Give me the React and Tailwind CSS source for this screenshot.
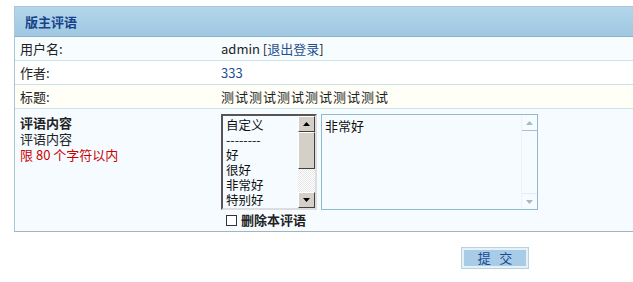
export default function App() {
  const font = { fontFamily: '"Noto Sans CJK SC", "Liberation Sans", sans-serif' };
  const items = ["自定义", "--------", "好", "很好", "非常好", "特别好"];
  return (
    <div className="w-[633px] h-[282px] overflow-hidden bg-white text-[13px] text-[#222] leading-[16px]" style={font}>
      <div className="pt-[6px] pl-[14px]">
        <div className="w-[640px] border-l border-t border-b border-[#a9c7d6] border-b-[#a3b4bb]">
          {/* header */}
          <div className="h-[30px] flex items-center pl-[10px] bg-gradient-to-b from-[#b2d6ea] to-[#a0c8e2] border-b border-[#8fb1c4]">
            <span className="font-bold text-[#17438a] text-[13px]">版主评语</span>
          </div>
          {/* rows */}
          <div className="h-[24px] flex items-center bg-[#f7fcff] border-b border-[#cbe4ea]">
            <div className="w-[206px] pl-[5px]">用户名:</div>
            <div>admin [<span className="text-[#1f4f8f]">退出登录</span>]</div>
          </div>
          <div className="h-[24px] flex items-center bg-white border-b border-[#cbe4ea]">
            <div className="w-[206px] pl-[5px]">作者:</div>
            <div className="text-[#1f4f8f]">333</div>
          </div>
          <div className="h-[24px] flex items-center bg-[#fffff8] border-b border-[#cbe4ea]">
            <div className="w-[206px] pl-[5px]">标题:</div>
            <div className="tracking-[1px] text-[#222]">测试测试测试测试测试测试</div>
          </div>
          <div className="h-[122px] flex bg-[#f5fbff] pt-[5px]">
            <div className="w-[206px] pl-[5px] flex flex-col pt-[1px]">
              <div className="font-bold">评语内容</div>
              <div>评语内容</div>
              <div className="text-[#cc0000]">限 80 个字符以内</div>
            </div>
            <div className="flex flex-col">
              <div className="flex gap-[4px]">
                {/* listbox */}
                <div className="w-[96px] h-[96px] bg-[#f5fbff] border-2 border-t-[#555] border-l-[#555] border-b-[#ddd] border-r-[#ddd] flex">
                  <div className="flex-1 flex flex-col pt-[1px] pl-[3px]">
                    {items.map((t) => (
                      <div key={t} className="h-[15px] leading-[15px] text-[12.5px] text-[#111] whitespace-nowrap">{t}</div>
                    ))}
                  </div>
                  <div className="w-[17px] flex flex-col">
                    <div className="h-[16px] bg-[#d4d0c8] border border-t-white border-l-white border-r-[#404040] border-b-[#404040] flex items-center justify-center">
                      <svg width="7" height="4" viewBox="0 0 7 4"><path d="M3.5 0L7 4H0Z" fill="#000" /></svg>
                    </div>
                    <div className="h-[37px] bg-[#d4d0c8] border border-t-white border-l-white border-r-[#404040] border-b-[#404040]" />
                    <div className="flex-1 bg-[repeating-conic-gradient(#e6e6e6_0_25%,#ffffff_0_50%)] bg-[length:2px_2px]" />
                    <div className="h-[16px] bg-[#d4d0c8] border border-t-white border-l-white border-r-[#404040] border-b-[#404040] flex items-center justify-center">
                      <svg width="7" height="4" viewBox="0 0 7 4"><path d="M0 0H7L3.5 4Z" fill="#000" /></svg>
                    </div>
                  </div>
                </div>
                {/* textarea */}
                <div className="w-[217px] h-[96px] bg-[#f5fbff] border border-[#8fb9cc] flex">
                  <div className="flex-1 pt-[3px] pl-[3px] text-[#111]">非常好</div>
                  <div className="w-[16px] flex flex-col justify-between border-l border-[#eaf3f8]">
                    <div className="h-[16px] flex items-center justify-center border-b border-[#a9c1cc]">
                      <svg width="7" height="4" viewBox="0 0 7 4"><path d="M3.5 0L7 4H0Z" fill="#a8b8c0" /></svg>
                    </div>
                    <div className="h-[16px] flex items-center justify-center border-t border-[#e3edf2]">
                      <svg width="7" height="4" viewBox="0 0 7 4"><path d="M0 0H7L3.5 4Z" fill="#a8b8c0" /></svg>
                    </div>
                  </div>
                </div>
              </div>
              <div className="flex items-center gap-[4px] mt-[2px] pl-[5px]">
                <div className="w-[11px] h-[11px] border border-[#333] bg-white" />
                <span className="font-bold">删除本评语</span>
              </div>
            </div>
          </div>
        </div>
      </div>
      <div className="pl-[462px] mt-[16px]">
        <div className="w-[66px] h-[20px] bg-[#a8cce8] border-2 border-[#e6f0f7] outline outline-1 outline-[#b9d0de] flex items-center justify-center text-[#1d4a8a] text-[13px]">
          提&nbsp;&nbsp;&nbsp;交
        </div>
      </div>
    </div>
  );
}
